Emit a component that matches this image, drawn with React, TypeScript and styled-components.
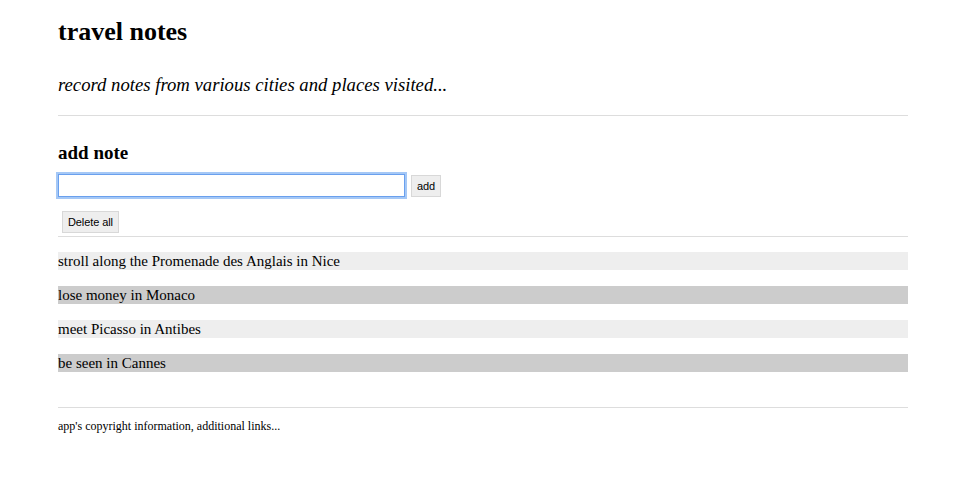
import React from "react";
import styled, { createGlobalStyle } from "styled-components";

const Global = createGlobalStyle`
  html, body { margin: 0; padding: 0; background: #fff; }
  body { font-family: "Liberation Serif", "Times New Roman", serif; color: #000; }
`;

const Page = styled.div`
  width: 850px;
  padding: 0 58px;
  display: flex;
  flex-direction: column;
`;

const Header = styled.header`
  display: flex;
  flex-direction: column;
`;

const Title = styled.h1`
  font-size: 26px;
  font-weight: bold;
  margin: 17px 0 0;
  line-height: 30px;
`;

const Subtitle = styled.h2`
  font-size: 18.7px;
  font-style: italic;
  font-weight: normal;
  margin: 27px 0 0;
  line-height: 22px;
`;

const Rule = styled.hr<{ $top: number }>`
  border: none;
  border-top: 1px solid #ddd;
  height: 0;
  margin: ${(p) => p.$top}px 0 0;
`;

const Section = styled.section`
  display: flex;
  flex-direction: column;
`;

const SectionTitle = styled.h3`
  font-size: 19px;
  font-weight: bold;
  margin: 26px 0 0;
  line-height: 22px;
`;

const Form = styled.form`
  display: flex;
  align-items: center;
  gap: 6px;
  margin-top: 10px;
`;

const Input = styled.input`
  box-sizing: border-box;
  width: 347px;
  height: 23px;
  border: 1px solid #6aa0ee;
  box-shadow: 0 0 0 2px #a5c8f6;
  outline: none;
  margin: 0;
  padding: 2px 4px;
  font-size: 13px;
`;

const Button = styled.button<{ $ml?: number }>`
  box-sizing: border-box;
  height: 22px;
  padding: 0 5px;
  margin: 0 0 0 ${(p) => p.$ml ?? 0}px;
  background: #eeeeee;
  border: 1px solid #d8d8d8;
  border-radius: 0;
  font-family: "Liberation Sans", Arial, sans-serif;
  font-size: 11px;
  letter-spacing: -0.1px;
  color: #000;
`;

const Actions = styled.div`
  display: flex;
  margin-top: 14px;
`;

const NoteList = styled.div`
  display: flex;
  flex-direction: column;
  gap: 16px;
  margin-top: 15px;
`;

const Note = styled.p<{ $dark: boolean }>`
  margin: 0;
  font-size: 15px;
  line-height: 18px;
  height: 18px;
  background: ${(p) => (p.$dark ? "#cccccc" : "#eeeeee")};
`;

const Footer = styled.footer`
  display: flex;
  flex-direction: column;
`;

const FooterText = styled.p`
  margin: 11px 0 0;
  font-size: 12px;
  line-height: 14px;
`;

const notes = [
  "stroll along the Promenade des Anglais in Nice",
  "lose money in Monaco",
  "meet Picasso in Antibes",
  "be seen in Cannes",
];

export default function App() {
  return (
    <>
      <Global />
      <Page>
        <Header>
          <Title>travel notes</Title>
          <Subtitle>record notes from various cities and places visited...</Subtitle>
        </Header>
        <Rule $top={19} />
        <Section>
          <SectionTitle>add note</SectionTitle>
          <Form onSubmit={(e) => e.preventDefault()}>
            <Input type="text" />
            <Button type="submit">add</Button>
          </Form>
          <Actions>
            <Button $ml={4}>Delete all</Button>
          </Actions>
        </Section>
        <Rule $top={3} />
        <NoteList>
          {notes.map((n, i) => (
            <Note key={n} $dark={i % 2 === 1}>
              {n}
            </Note>
          ))}
        </NoteList>
        <Rule $top={35} />
        <Footer>
          <FooterText>app's copyright information, additional links...</FooterText>
        </Footer>
      </Page>
    </>
  );
}
